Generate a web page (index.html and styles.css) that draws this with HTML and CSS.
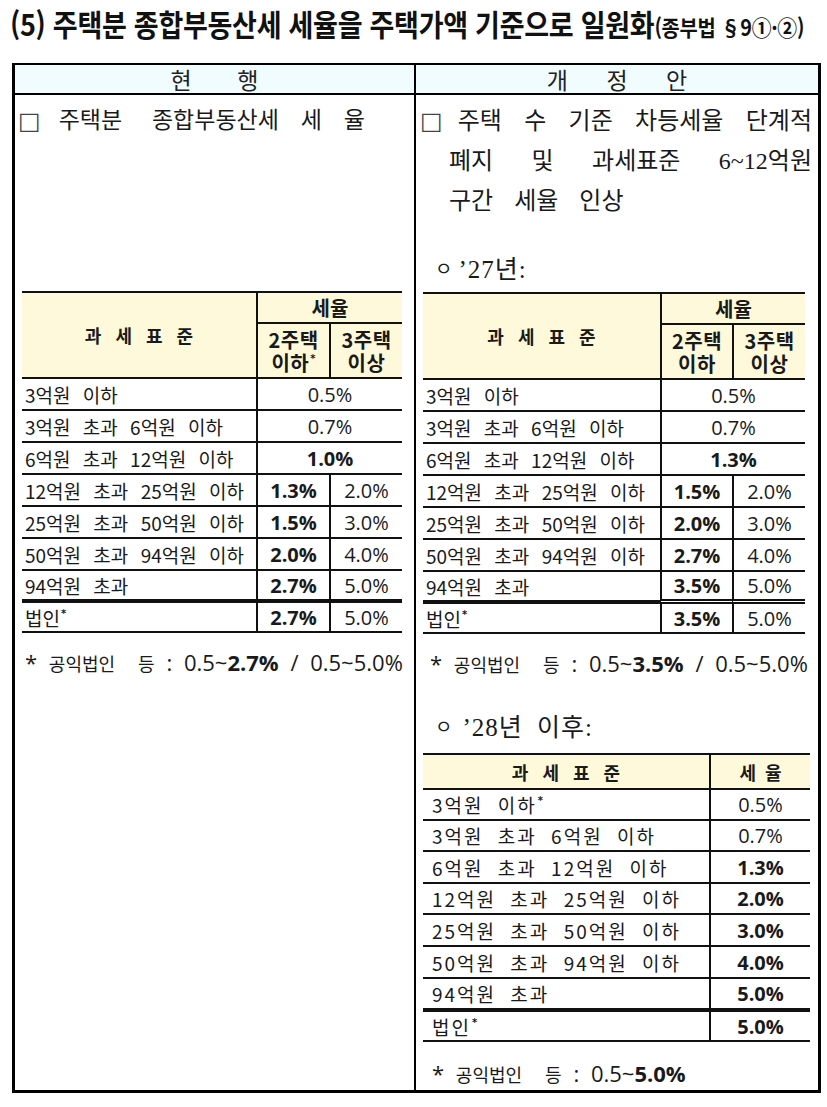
FILE: index.html
```html
<!DOCTYPE html>
<html lang="ko">
<head>
<meta charset="utf-8">
<title>주택분 종합부동산세 세율</title>
<link rel="stylesheet" href="styles.css">
</head>
<body>
<div class="title"><span class="title-in">(5) 주택분 종합부동산세 세율을 주택가액 기준으로 일원화<span class="title-sub">(종부법 §9①·②)</span></span></div>
<div class="doc">
  <div class="hd hd-l">현 행</div>
  <div class="hd hd-r">개 정 안</div>

  <div class="cell cell-l">
    <div class="ln row para-l"><span class="box">□ </span><span>주택분 종합부동산세 <span class="wide">세율</span></span></div>

    <div class="tb t1 tb-l">
      <div class="th k2">과 세 표 준</div>
      <div class="th v sc">세율</div>
      <div class="th v two"><span>2주택<br>이하<sup>*</sup></span></div>
      <div class="th v two"><span>3주택<br>이상</span></div>

      <div class="k">3억원 이하</div><div class="v sc">0.5%</div>
      <div class="k">3억원 초과 6억원 이하</div><div class="v sc">0.7%</div>
      <div class="k">6억원 초과 12억원 이하</div><div class="v sc b">1.0%</div>
      <div class="k">12억원 초과 25억원 이하</div><div class="v b">1.3%</div><div class="v">2.0%</div>
      <div class="k">25억원 초과 50억원 이하</div><div class="v b">1.5%</div><div class="v">3.0%</div>
      <div class="k">50억원 초과 94억원 이하</div><div class="v b">2.0%</div><div class="v">4.0%</div>
      <div class="k thick">94억원 초과</div><div class="v b thick">2.7%</div><div class="v thick">5.0%</div>
      <div class="k"><span>법인<sup>*</sup></span></div><div class="v b">2.7%</div><div class="v">5.0%</div>
    </div>

    <div class="fn fn-l">* <span class="hg">공익법인 등</span> : 0.5~<b>2.7%</b> / 0.5~5.0%</div>
  </div>

  <div class="cell cell-r">
    <div class="para-r">
      <div class="ln row"><span class="box">□ </span><span class="jt">주택 수 기준 차등세율 단계적</span></div>
      <div class="ln just ind">폐지 및 과세표준 6~12억원</div>
      <div class="ln ind">구간 세율 인상</div>
    </div>

    <div class="sub sub1"><span class="bul">ㅇ</span><span>’27년:</span></div>

    <div class="tb t2">
      <div class="th k2">과 세 표 준</div>
      <div class="th v sc">세율</div>
      <div class="th v two"><span>2주택<br>이하</span></div>
      <div class="th v two"><span>3주택<br>이상</span></div>

      <div class="k">3억원 이하</div><div class="v sc">0.5%</div>
      <div class="k">3억원 초과 6억원 이하</div><div class="v sc">0.7%</div>
      <div class="k">6억원 초과 12억원 이하</div><div class="v sc b">1.3%</div>
      <div class="k">12억원 초과 25억원 이하</div><div class="v b">1.5%</div><div class="v">2.0%</div>
      <div class="k">25억원 초과 50억원 이하</div><div class="v b">2.0%</div><div class="v">3.0%</div>
      <div class="k">50억원 초과 94억원 이하</div><div class="v b">2.7%</div><div class="v">4.0%</div>
      <div class="k thick">94억원 초과</div><div class="v b thick dbl">3.5%</div><div class="v thick dbl">5.0%</div>
      <div class="k"><span>법인<sup>*</sup></span></div><div class="v b">3.5%</div><div class="v">5.0%</div>
    </div>

    <div class="fn fn-r">* <span class="hg">공익법인 등</span> : 0.5~<b>3.5%</b> / 0.5~5.0%</div>

    <div class="sub sub2"><span class="bul">ㅇ</span><span>’28년 이후:</span></div>

    <div class="tb t3">
      <div class="th k3h">과 세 표 준</div>
      <div class="th v k3h">세 율</div>

      <div class="k k3"><span>3억원 이하<sup>*</sup></span></div><div class="v">0.5%</div>
      <div class="k k3">3억원 초과 6억원 이하</div><div class="v">0.7%</div>
      <div class="k k3">6억원 초과 12억원 이하</div><div class="v b">1.3%</div>
      <div class="k k3">12억원 초과 25억원 이하</div><div class="v b">2.0%</div>
      <div class="k k3">25억원 초과 50억원 이하</div><div class="v b">3.0%</div>
      <div class="k k3">50억원 초과 94억원 이하</div><div class="v b">4.0%</div>
      <div class="k k3 thick">94억원 초과</div><div class="v b thick">5.0%</div>
      <div class="k k3"><span>법인<sup>*</sup></span></div><div class="v b">5.0%</div>
    </div>

    <div class="fn fn-3">* <span class="hg">공익법인 등</span> : 0.5~<b>5.0%</b></div>
  </div>
</div>
</body>
</html>
```
FILE: styles.css
```css
* { box-sizing: border-box; margin: 0; padding: 0; }
html, body { background: #fff; }
body {
  width: 827px;
  font-family: "Noto Sans CJK KR", "Noto Sans", sans-serif;
  color: #1a1a1a;
}

/* title */
.title {
  height: 63px;
  padding: 5px 0 0 10px;
  white-space: nowrap;
  overflow: hidden;
  color: #111;
}
.title-in {
  display: inline-block;
  font-size: 30px;
  font-weight: 700;
  line-height: 36px;
  letter-spacing: -0.3px;
  transform: scaleX(0.9);
  transform-origin: 0 50%;
}
.title-sub { font-size: 22px; }

/* outer document table */
.doc {
  margin-left: 12px;
  width: 809px;
  display: grid;
  grid-template-columns: 401px 402px;
  border: 3px solid #000;
  border-top-width: 2px;
}
.hd {
  height: 30px;
  background: #f0fcff;
  border-bottom: 2px solid #000;
  display: flex;
  align-items: center;
  justify-content: center;
  font-size: 23px;
  line-height: 1;
  color: #222;
}
.hd-l { border-right: 2px solid #000; word-spacing: 39px; }
.hd-r { word-spacing: 32px; }

.cell { padding-bottom: 2px; }
.cell-l { border-right: 2px solid #000; padding-left: 7px; padding-right: 12px; }
.cell-r { padding-left: 7px; padding-right: 13px; }

/* paragraph lines */
.ln {
  font-family: "Liberation Serif", "Noto Sans CJK KR", serif;
  font-size: 24px;
  line-height: 40px;
  height: 40px;
  word-spacing: 15px;
  white-space: nowrap;
  color: #1a1a1a;
}
.row { display: flex; align-items: center; }
.box {
  font-family: "DejaVu Sans", sans-serif;
  font-size: 24px;
  line-height: 1;
  word-spacing: 0;
  color: #444;
  flex: none;
}
.just { text-align: justify; text-align-last: justify; white-space: normal; word-spacing: 0; }
.jt { flex: 1; text-align: justify; text-align-last: justify; white-space: normal; word-spacing: 0; }
.para-l { margin: 6px 0 0 -4px; font-size: 23px; word-spacing: 24px; }
.para-l .box { margin-right: 18px; }
.wide { letter-spacing: 22px; margin-left: -8px; }
.para-r { margin: 6px -7px 0 -3px; }
.para-r .box { margin-right: 15px; }
.ind { padding-left: 29px; }

/* bullet lines */
.sub {
  height: 30px;
  display: flex;
  align-items: center;
  font-family: "Liberation Serif", "Noto Sans CJK KR", serif;
  font-size: 25px;
  letter-spacing: 1px;
  word-spacing: 7px;
}
.bul {
  font-family: "Noto Sans CJK KR", sans-serif;
  font-size: 19px;
  line-height: 1;
  letter-spacing: 0;
  margin-left: 12px;
  margin-right: 6px;
}
.sub1 { margin-top: 31px; }
.sub2 { margin-top: 32px; }
.sub2 .bul { margin-right: 10px; }

/* inner rate tables */
.tb {
  display: grid;
  border-top: 2px solid #111;
}
.tb > div {
  border-bottom: 2px solid #111;
  display: flex;
  align-items: center;
  min-width: 0;
  white-space: nowrap;
}
.tb-l { margin-top: 150px; }
.t1 { grid-template-columns: 234px 73px 73px; grid-template-rows: 31px 55px repeat(7, 32px) 30px; }
.t2 { margin-top: 10px; grid-template-columns: 237px 72px 73px; grid-template-rows: 31px 55px repeat(7, 32px) 30px; }
.t3 {
  margin-top: 13px;
  width: 387px;
  grid-template-columns: 286px 101px;
  grid-template-rows: 35px 31px 31px 32px 31px 32px 32px 33px 30px;
}

.th {
  background: #fff9dc;
  font-weight: 700;
  justify-content: center;
  text-align: center;
  color: #1a1a1a;
}
.k2 { grid-row: span 2; font-size: 18px; word-spacing: 9px; }
.sc { grid-column: span 2; }
.th.v { font-family: "Noto Sans CJK KR", sans-serif; font-size: 20px; }
.two { line-height: 23px; letter-spacing: 0.5px; }
.k3h { font-size: 18px; word-spacing: 9px; }
.th.v.k3h { font-size: 18px; word-spacing: 4px; }

.k {
  font-size: 19px;
  padding-left: 3px;
  word-spacing: 7px;
}
.k3 { padding-left: 9px; letter-spacing: 2px; }
.v {
  border-left: 2px solid #111;
  justify-content: center;
  font-family: "Open Sans", "Noto Sans CJK KR", sans-serif;
  font-size: 20px;
}
.b { font-weight: 700; }

.tb > .thick { border-bottom-width: 4px; }
.tb > .dbl { border-bottom: 5px double #111; }

sup {
  font-family: "DejaVu Sans", sans-serif;
  font-size: 10px;
  font-weight: 700;
  line-height: 0;
  vertical-align: 9px;
  margin-left: 1px;
  letter-spacing: 0;
}

/* footnotes */
.fn {
  height: 30px;
  line-height: 30px;
  font-family: "Open Sans", "Noto Sans CJK KR", sans-serif;
  font-size: 22px;
  word-spacing: 6px;
  white-space: nowrap;
}
.hg { font-family: "Noto Sans CJK KR", sans-serif; font-size: 18px; line-height: 1; word-spacing: 18px; }
.fn-l { margin: 14px 0 0 3px; }
.fn-r { margin: 14px 0 0 7px; }
.fn-3 { margin: 16px 0 0 9px; }
```
